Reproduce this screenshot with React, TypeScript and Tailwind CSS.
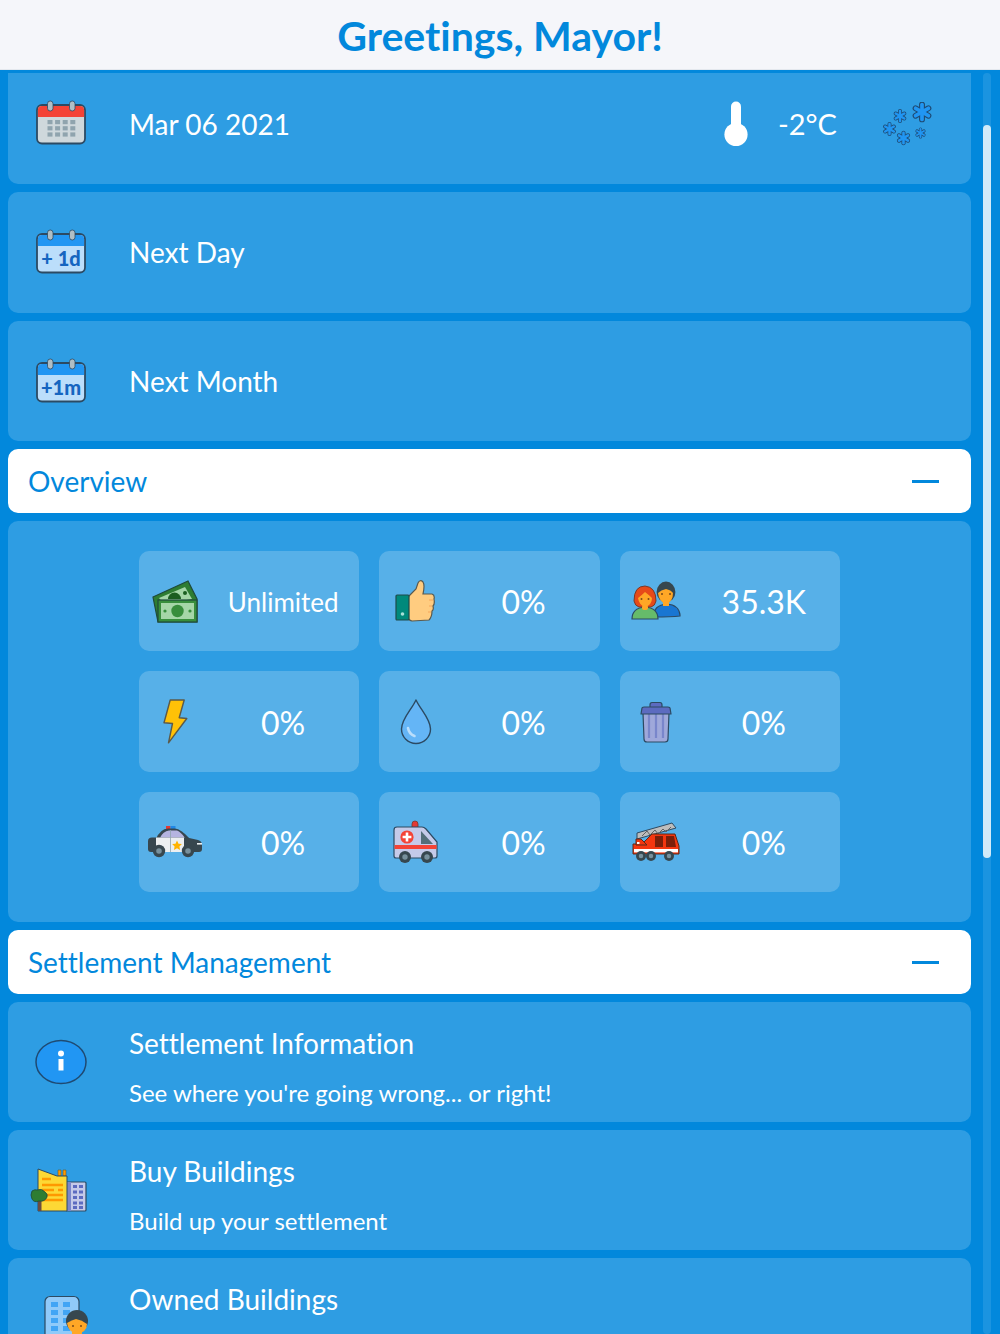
import type { ReactNode } from "react";

const ink = "#2c4a63";

function CalendarBase({ top, body, children }: { top: string; body: string; children: ReactNode }) {
  return (
    <svg width="52" height="46" viewBox="0 0 52 46">
      <rect x="2" y="5" width="48" height="38.5" rx="5" fill={body} stroke={ink} strokeWidth="1.8" />
      <path d="M2.9 17V10a4.1 4.1 0 0 1 4.1-4.1h38a4.1 4.1 0 0 1 4.1 4.1v7z" fill={top} />
      <rect x="12.5" y="1" width="5.5" height="10" rx="2.7" fill="#b0bec5" stroke={ink} strokeWidth="0.8" />
      <rect x="34.5" y="1" width="5.5" height="10" rx="2.7" fill="#b0bec5" stroke={ink} strokeWidth="0.8" />
      {children}
    </svg>
  );
}

function CalendarIcon() {
  const xs = [12, 19.6, 27.2, 34.8];
  const ys = [20, 26.2, 32.4];
  return (
    <CalendarBase top="#f44336" body="#cfd8dc">
      {ys.map((y) => xs.map((x) => <rect key={`${x}-${y}`} x={x + 0.5} y={y} width="5" height="4.2" fill="#90a4ae" />))}
    </CalendarBase>
  );
}

function PlusCalendar({ label, size }: { label: string; size: number }) {
  return (
    <CalendarBase top="#2196f3" body="#bbdefb">
      <text x="26" y="37" textAnchor="middle" fontFamily="Lato, sans-serif" fontWeight="900" fontSize={size} fill="#1565c0">
        {label}
      </text>
    </CalendarBase>
  );
}

function Thermometer() {
  return (
    <svg width="24" height="46" viewBox="0 0 24 46">
      <rect x="7" y="0.5" width="10" height="30" rx="5" fill="#fff" />
      <ellipse cx="12" cy="33.5" rx="11.6" ry="11.6" fill="#fff" />
    </svg>
  );
}

function Flake({ cx, cy, r }: { cx: number; cy: number; r: number }) {
  const spokes = [0, 60, 120].map((a) => {
    const t = (a * Math.PI) / 180 + Math.PI / 2;
    return { x: Math.cos(t) * r, y: Math.sin(t) * r };
  });
  return (
    <g>
      {spokes.map((s, i) => (
        <line key={i} x1={cx - s.x} y1={cy - s.y} x2={cx + s.x} y2={cy + s.y} stroke="#1f4a72" strokeWidth={r * 0.8} strokeLinecap="round" />
      ))}
      {spokes.map((s, i) => (
        <line key={`f${i}`} x1={cx - s.x} y1={cy - s.y} x2={cx + s.x} y2={cy + s.y} stroke="#2196f3" strokeWidth={r * 0.5} strokeLinecap="round" />
      ))}
    </g>
  );
}

function Snow() {
  return (
    <svg width="50" height="44" viewBox="0 0 50 44">
      <Flake cx={39} cy={10} r={7.4} />
      <Flake cx={17} cy={14} r={5} />
      <Flake cx={6.5} cy={27} r={5} />
      <Flake cx={20.5} cy={36} r={5.2} />
      <Flake cx={37.5} cy={31} r={4} />
    </svg>
  );
}

function Money() {
  return (
    <svg width="46" height="43" viewBox="0 0 46 43">
      <path d="M1 17 L36 1 L45 19 L45 42 L6 42 Z" fill="#2e7d32" stroke="#1f4a3a" strokeWidth="1.2" />
      <path d="M7 18 L33 7 L40 19 L12 24Z" fill="#a5d6a7" />
      <path d="M16 19a6.5 6.5 0 0 1 13 0z" fill="#1b5e20" />
      <circle cx="33" cy="13" r="2" fill="#1b5e20" />
      <rect x="6" y="20" width="39" height="22" fill="#388e3c" stroke="#1f4a3a" strokeWidth="1.2" />
      <rect x="9" y="23" width="33" height="16" fill="#a5d6a7" />
      <circle cx="25.5" cy="31" r="6.2" fill="#388e3c" />
      <circle cx="13" cy="31" r="1.6" fill="#388e3c" />
      <circle cx="38" cy="31" r="1.6" fill="#388e3c" />
    </svg>
  );
}

function Thumb() {
  return (
    <svg width="42" height="42" viewBox="0 0 42 42" className="ml-[1px]">
      <path d="M13 17 L21 9 L23 3 Q25 -1 28 2 Q30 5 28 14 L37 14 Q40 15 39 19 Q40 24 38 26 Q39 30 37 31 Q37 37 34 40 L17 41 Q13 40 13 37 Z" fill="#ffcc80" stroke="#5a5a4e" strokeWidth="1.2" />
      <rect x="1" y="15" width="13" height="25" rx="1" fill="#00897b" stroke="#1f4a4a" strokeWidth="1.2" />
      <circle cx="7.5" cy="34" r="1.8" fill="#a7e0d8" />
      <path d="M34 20h4M34 26h3M33 32h3" stroke="#f5a55a" strokeWidth="1.2" />
    </svg>
  );
}

function People() {
  return (
    <svg width="50" height="40" viewBox="0 0 50 40">
      <path d="M23 36 Q22 24 36 23 Q48 24 49 34 L49 35 Q40 36 23 36Z" fill="#1976d2" stroke={ink} strokeWidth="1.2" />
      <ellipse cx="35" cy="11" rx="9.4" ry="10.4" fill="#37474f" />
      <path d="M27 12 Q30 9 35 8 Q40 9 42 12 Q42 21 35 23 Q28 21 27 12Z" fill="#ffa726" />
      <rect x="32" y="20" width="6" height="5" fill="#ffa726" />
      <circle cx="31" cy="13" r="1" fill="#7a4a1a" />
      <circle cx="39" cy="13" r="1" fill="#7a4a1a" />
      <path d="M1 38 Q1 27 14 26 Q27 27 27 38Z" fill="#66bb6a" stroke={ink} strokeWidth="1.2" />
      <path d="M3 20 Q3 5 14 5 Q25 6 25 20 Q24 25 20 26 L8 26 Q4 25 3 20Z" fill="#e64a19" stroke="#7a3a2a" strokeWidth="1" />
      <path d="M7 17 Q11 14 14 11 Q18 14 21 17 Q21 24 14 26 Q8 24 7 17Z" fill="#ffa726" />
      <rect x="11" y="24" width="6" height="5" rx="2" fill="#ffa726" />
      <circle cx="10.5" cy="18" r="1" fill="#7a4a1a" />
      <circle cx="17.5" cy="18" r="1" fill="#7a4a1a" />
    </svg>
  );
}

function Bolt() {
  return (
    <svg width="25" height="46" viewBox="-0.5 -0.5 25 46">
      <polygon points="6.7,0.5 20.7,0.5 15.7,18.3 23.3,19 5,43.3 9,24 0.5,23.3" fill="#ffc107" stroke="#5b5a4a" strokeWidth="1.4" strokeLinejoin="round" />
    </svg>
  );
}

function Drop() {
  return (
    <svg width="32" height="46" viewBox="0 0 32 46" className="ml-[1px]">
      <path d="M16 1 C12 10 1.5 20 1.5 30 A14.5 14.5 0 0 0 30.5 30 C30.5 20 20 10 16 1Z" fill="#64b5f6" stroke={ink} strokeWidth="1.4" strokeLinejoin="round" />
      <path d="M8 29 Q9 35 14.5 37" stroke="#bbdefb" strokeWidth="2.6" strokeLinecap="round" fill="none" />
    </svg>
  );
}

function Trash() {
  return (
    <svg width="34" height="42" viewBox="0 0 34 42">
      <path d="M4 12 H30 L29 38 Q29 41 26 41 H8 Q5 41 5 38Z" fill="#9fa8da" stroke={ink} strokeWidth="1.2" />
      <path d="M10 13v24M17 13v24M24 13v24" stroke="#7986cb" strokeWidth="2.2" />
      <path d="M11 6 V4 Q11 1.5 13 1.5 H21 Q23 1.5 23 4 V6" fill="#5c6bc0" stroke={ink} strokeWidth="1.2" />
      <path d="M3 7 Q3 6 5 6 H29 Q31 6 31 7 L32 13 H2Z" fill="#5c6bc0" stroke={ink} strokeWidth="1.2" strokeLinejoin="round" />
    </svg>
  );
}

function Wheel({ cx, cy, r }: { cx: number; cy: number; r: number }) {
  return (
    <g>
      <circle cx={cx} cy={cy} r={r} fill="#37474f" />
      <circle cx={cx} cy={cy} r={r * 0.45} fill="#78909c" />
    </g>
  );
}

function PoliceCar() {
  return (
    <svg width="56" height="33" viewBox="0 0 56 33">
      <rect x="19" y="1" width="4.5" height="3.5" fill="#e53935" />
      <rect x="23.5" y="1" width="5" height="3.5" fill="#1e88e5" />
      <path d="M9 14 Q13 4 21 3.5 H28 Q34 4 42 13 Z" fill="#37474f" />
      <path d="M13 13 Q16 6 22 5.5 H30 Q34 7 38 13 Z" fill="#b5b4e0" />
      <path d="M1 16 Q1 12.5 5 12.5 H40 L51 15 Q55 16 55 20 V24 Q55 27 52 27 H4 Q1 27 1 24Z" fill="#37474f" />
      <path d="M9 12.5 H37 V27 H9Z" fill="#eceff1" />
      <path d="M23.5 5v22" stroke="#90a4ae" strokeWidth="0.8" />
      <path d="M30 15.5l1.5 3.2 3.4.4-2.5 2.4.7 3.4-3.1-1.7-3.1 1.7.7-3.4-2.5-2.4 3.4-.4z" fill="#ffb300" />
      <rect x="50" y="18" width="5" height="1.6" fill="#eceff1" />
      <Wheel cx={12} cy={26} r={6.2} />
      <Wheel cx={41} cy={26} r={6.2} />
    </svg>
  );
}

function Ambulance() {
  return (
    <svg width="46" height="44" viewBox="0 0 46 44" className="ml-[1px]">
      <path d="M19 8 V4 Q19 1 22 1 Q25 1 25 4 V8Z" fill="#e53935" stroke="#7a3a2a" strokeWidth="0.8" />
      <path d="M1 10 Q1 7 4 7 H29 Q31 7 33 9 L44 22 V36 Q44 38 42 38 H3 Q1 38 1 36Z" fill="#c5cae9" stroke={ink} strokeWidth="1.2" />
      <path d="M28 11 L40 24 H28Z" fill="#546e7a" />
      <rect x="1.6" y="25" width="42" height="4" fill="#f44336" />
      <circle cx="14" cy="17" r="6.6" fill="#f44336" />
      <path d="M14 12.6v8.8M9.6 17h8.8" stroke="#fff" strokeWidth="2.6" />
      <Wheel cx={12} cy={37} r={6} />
      <Wheel cx={34} cy={37} r={6} />
    </svg>
  );
}

function FireTruck() {
  return (
    <svg width="49" height="40" viewBox="0 0 49 40" className="ml-[1px]">
      <path d="M5 11 L40 1 L44 6 L5 17Z" fill="#bdbdbd" stroke={ink} strokeWidth="1" />
      <path d="M10 14 L15 9 L18 13 L23 8 L26 12 L31 7 L34 10 L39 5" stroke="#616161" strokeWidth="1" fill="none" />
      <path d="M1 22 H10 L20 12 H43 L47 24 V32 H1Z" fill="#f4360f" stroke="#5a2a1a" strokeWidth="1" />
      <path d="M4 17 L9 17 L15 23 H4Z" fill="#f4360f" stroke="#5a2a1a" strokeWidth="1" />
      <path d="M23 14 H31 V25 H23Z M34 14 H42 L44 25 H34Z" fill="#7b1f0a" />
      <rect x="2" y="27" width="44" height="3.4" fill="#fff" />
      <rect x="5" y="20" width="2.5" height="2" fill="#fff" />
      <Wheel cx={9} cy={34} r={5} />
      <Wheel cx={19} cy={34} r={5} />
      <Wheel cx={37} cy={34} r={5} />
    </svg>
  );
}

function InfoIcon() {
  return (
    <svg width="52" height="46" viewBox="0 0 52 46">
      <ellipse cx="26" cy="23" rx="25" ry="21.6" fill="#2196f3" stroke="#1f4a72" strokeWidth="1.5" />
      <circle cx="26" cy="14.5" r="3" fill="#fff" />
      <rect x="23.5" y="20" width="5" height="11.5" fill="#fff" />
    </svg>
  );
}

function Buildings() {
  return (
    <svg width="58" height="44" viewBox="0 0 58 44" className="mr-[5px]">
      <path d="M37 28 V14 H55 Q56 14 56 15 V42 Q56 43 55 43 H37Z" fill="#c5cae9" stroke={ink} strokeWidth="1.2" />
      <rect x="37" y="14" width="4" height="29" fill="#7986cb" />
      {[17, 22.5, 28, 33.5, 38].map((y) => (
        <g key={y} fill="#5c6bc0">
          <rect x="43" y={y} width="4" height="3" />
          <rect x="49" y={y} width="4" height="3" />
        </g>
      ))}
      <path d="M28 8V2h3v6zM33 8V2h3v6z" fill="#ff9800" stroke="#6a5a2a" strokeWidth="0.6" />
      <path d="M8 1 L27 8 L37 8 V43 H8Z" fill="#fdd835" stroke={ink} strokeWidth="1" />
      <path d="M12 11h9M12 17h21M12 22h12M28 22h5M12 27h21M12 32h21" stroke="#ff9800" strokeWidth="2.6" />
      <rect x="8" y="33" width="3.5" height="10" fill="#6d4c41" />
      <path d="M2 23 Q5 21 7 22 Q12 20 15 24 Q18 26 17 29 Q15 34 9 33 Q4 35 2 31 Q0 27 2 23Z" fill="#2e7d32" stroke="#1f4a3a" strokeWidth="0.8" />
    </svg>
  );
}

function OwnedBuildings() {
  return (
    <svg width="46" height="44" viewBox="0 0 46 44" className="overflow-visible ml-[11px]">
      <rect x="1" y="0.5" width="34" height="60" rx="5" fill="#90caf9" stroke={ink} strokeWidth="1.2" />
      {[6, 14, 22, 30].map((y) => (
        <g key={y} fill="#42a5f5">
          <rect x="7" y={y} width="7" height="5" />
          <rect x="19" y={y} width="7" height="5" />
        </g>
      ))}
      <ellipse cx="33" cy="25" rx="11" ry="11" fill="#37474f" />
      <path d="M23 27 Q28 24 32 23 Q38 24 43 28 Q43 36 33 38 Q24 36 23 27Z" fill="#ffa726" />
      <circle cx="29" cy="30" r="1" fill="#7a4a1a" />
      <circle cx="37" cy="30" r="1" fill="#7a4a1a" />
      <rect x="28" y="36" width="10" height="10" fill="#ffa726" />
    </svg>
  );
}

function IconSlot({ children }: { children: ReactNode }) {
  return <div className="w-[106px] shrink-0 flex justify-center">{children}</div>;
}

function ActionRow({ icon, label }: { icon: ReactNode; label: string }) {
  return (
    <div className="h-[120.5px] shrink-0 bg-[#2e9de3] rounded-[10px] flex items-center">
      <IconSlot>{icon}</IconSlot>
      <span className="ml-[15px] text-[28px] text-white">{label}</span>
    </div>
  );
}

function InfoRow({ icon, title, sub }: { icon: ReactNode; title: string; sub?: string }) {
  return (
    <div className="h-[120px] shrink-0 bg-[#2e9de3] rounded-[10px] flex items-center">
      <IconSlot>{icon}</IconSlot>
      <div className="ml-[15px] self-start pt-[21px] text-white">
        <p className="text-[28px] leading-[40px]">{title}</p>
        {sub && <p className="mt-[15px] text-[24px] leading-[30px]">{sub}</p>}
      </div>
    </div>
  );
}

function SectionHeader({ title }: { title: string }) {
  return (
    <div className="h-16 shrink-0 bg-white rounded-[10px] flex items-center justify-between pl-5 pr-8">
      <span className="text-[28px] text-[#0288dc]">{title}</span>
      <span className="w-[27px] h-[3px] bg-[#0288dc]" />
    </div>
  );
}

function StatCell({ icon, value, small }: { icon: ReactNode; value: string; small?: boolean }) {
  return (
    <div className="h-[100.4px] bg-white/20 rounded-[10px] flex items-center">
      <div className="w-[68px] pl-[4px] shrink-0 flex justify-center">{icon}</div>
      <span className={`flex-1 pt-[2px] text-center text-white ${small ? "text-[26px]" : "text-[32px]"}`}>{value}</span>
    </div>
  );
}

export default function App() {
  return (
    <div className="h-screen overflow-hidden bg-[#0288dc] font-['Lato',sans-serif] [font-variant-ligatures:none] flex flex-col">
      <header className="h-[70px] shrink-0 bg-[#f5f6fa] border-b border-[#e4e8ee] flex items-center justify-center">
        <h1 className="pt-[2px] text-[41px] font-bold text-[#0288dc]">Greetings, Mayor!</h1>
      </header>
      <div className="flex-1 min-h-0 flex pt-[3px]">
        <main className="ml-2 w-[963px] shrink-0 flex flex-col gap-2">
          <div className="h-[111px] shrink-0 bg-[#2e9de3] rounded-b-[10px] flex items-center pb-[9px]">
            <IconSlot><div className="-mt-[2px]"><CalendarIcon /></div></IconSlot>
            <span className="ml-[15px] text-[28px] text-white">Mar 06 2021</span>
            <div className="ml-auto flex items-center">
              <Thermometer />
              <span className="ml-[30px] text-[29px] text-white">-2°C</span>
              <div className="ml-[46px] mr-[38px]"><Snow /></div>
            </div>
          </div>
          <ActionRow icon={<PlusCalendar label="+ 1d" size={20} />} label="Next Day" />
          <ActionRow icon={<PlusCalendar label="+1m" size={20} />} label="Next Month" />
          <SectionHeader title="Overview" />
          <section className="h-[401px] shrink-0 bg-[#2e9de3] rounded-[10px] flex justify-center pt-[30px]">
            <div className="w-[701px] grid grid-cols-3 gap-5 content-start">
              <StatCell icon={<Money />} value="Unlimited" small />
              <StatCell icon={<Thumb />} value="0%" />
              <StatCell icon={<People />} value="35.3K" />
              <StatCell icon={<Bolt />} value="0%" />
              <StatCell icon={<Drop />} value="0%" />
              <StatCell icon={<Trash />} value="0%" />
              <StatCell icon={<PoliceCar />} value="0%" />
              <StatCell icon={<Ambulance />} value="0%" />
              <StatCell icon={<FireTruck />} value="0%" />
            </div>
          </section>
          <SectionHeader title="Settlement Management" />
          <InfoRow icon={<InfoIcon />} title="Settlement Information" sub="See where you're going wrong... or right!" />
          <InfoRow icon={<Buildings />} title="Buy Buildings" sub="Build up your settlement" />
          <InfoRow icon={<OwnedBuildings />} title="Owned Buildings" />
        </main>
        <div className="ml-3 w-2 h-[1261px] shrink-0 rounded bg-white/10 pt-[52px]">
          <div className="h-[733px] rounded bg-white/80" />
        </div>
      </div>
    </div>
  );
}
